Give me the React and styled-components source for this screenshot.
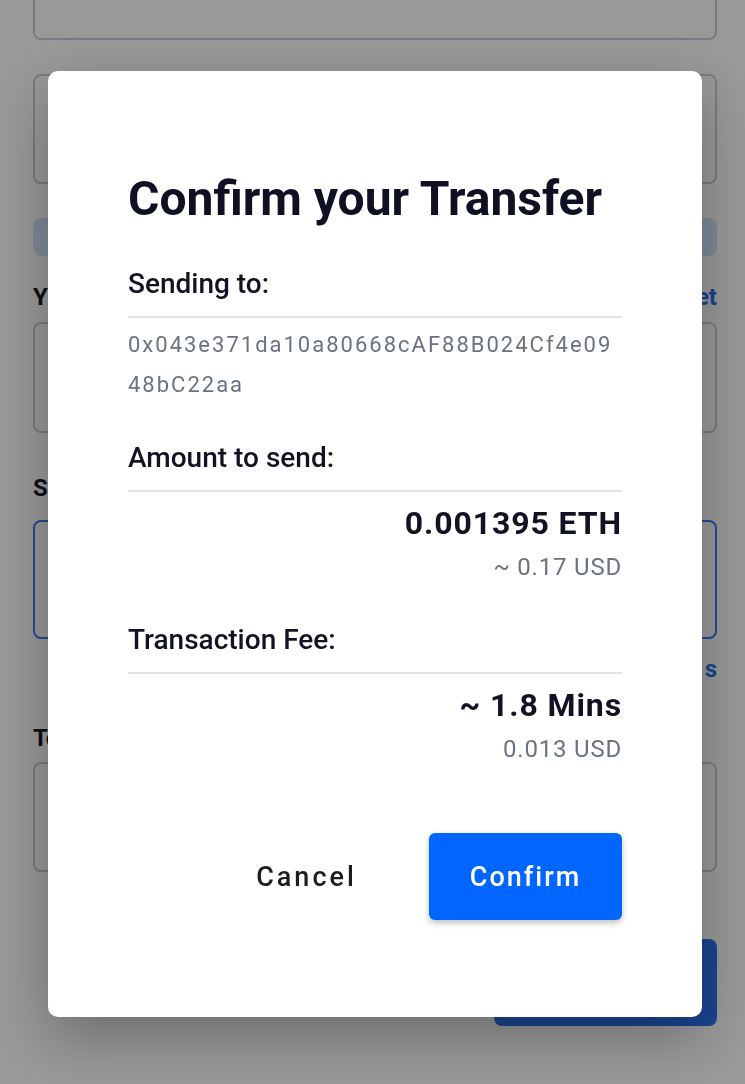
import styled, { createGlobalStyle } from "styled-components";

const GlobalStyle = createGlobalStyle`
  html, body {
    margin: 0;
    padding: 0;
    background: #ffffff;
    font-family: Roboto, "Liberation Sans", sans-serif;
    overflow: hidden;
  }
`;

export const Page = styled.div`
  display: flex;
  flex-direction: column;
  padding: 0 28px 0 33px;
  margin-top: -70px;
`;

export const Field = styled.div`
  height: ${(p) => p.$height || 110}px;
  box-sizing: border-box;
  border: ${(p) => (p.$focused ? "2px solid #3b7ff5" : "2px solid #c7cfdb")};
  border-radius: 8px;
  margin-bottom: ${(p) => p.$gap || 0}px;
`;

export const Bar = styled.div`
  height: 38px;
  border-radius: 8px;
  background: #d4e6ff;
  margin-bottom: 26px;
`;

export const LabelRow = styled.div`
  display: flex;
  justify-content: space-between;
  align-items: center;
  height: 30px;
  margin-bottom: ${(p) => p.$gap || 10}px;
  font-size: 24px;
  font-weight: 700;
  color: #151826;
`;

export const Link = styled.span`
  color: #2b6ff0;
  font-weight: 700;
`;

export const HintRow = styled.div`
  display: flex;
  justify-content: flex-end;
  height: 30px;
  margin: 16px 0 38px;
  font-size: 24px;
`;

export const SubmitRow = styled.div`
  display: flex;
  justify-content: flex-end;
  margin-top: 67px;
`;

export const SubmitButton = styled.div`
  width: 223px;
  height: 87px;
  border-radius: 8px;
  background: #2c74f2;
`;

export const Overlay = styled.div`
  position: fixed;
  inset: 0;
  padding: 4px 0 0 5px;
  background: rgba(0, 0, 0, 0.4);
  display: flex;
  align-items: center;
  justify-content: center;
`;

export const Modal = styled.div`
  width: 654px;
  box-sizing: border-box;
  background: #ffffff;
  border-radius: 10px;
  padding: 100px 80px 97px;
  box-shadow: 0 20px 60px rgba(0, 0, 0, 0.3);
  display: flex;
  flex-direction: column;
`;

export const Title = styled.h1`
  margin: 0;
  font-size: 48px;
  line-height: 56px;
  font-weight: 700;
  color: #0f1123;
`;

export const Section = styled.div`
  margin-top: ${(p) => p.$gap}px;
  display: flex;
  flex-direction: column;
`;

export const SectionLabel = styled.div`
  font-size: 28px;
  line-height: 34px;
  font-weight: 500;
  color: #111322;
  padding-bottom: 15px;
  border-bottom: 2px solid #e3e3e3;
`;

export const Address = styled.div`
  margin-top: 7px;
  font-size: 22px;
  line-height: 40px;
  letter-spacing: 2px;
  color: #6b7280;
  word-break: break-all;
`;

export const Value = styled.div`
  margin-top: 11px;
  text-align: right;
  font-size: 32px;
  line-height: 40px;
  font-weight: 700;
  letter-spacing: 0.9px;
  color: #111322;
`;

export const SubValue = styled.div`
  margin-top: 8px;
  text-align: right;
  font-size: 24px;
  line-height: 32px;
  letter-spacing: 0.8px;
  color: #6b7280;
`;

export const Actions = styled.div`
  margin-top: 68px;
  display: flex;
  justify-content: flex-end;
  gap: 26px;
`;

export const Button = styled.button`
  width: 193px;
  height: 87px;
  padding: 0;
  border: none;
  border-radius: 6px;
  font-family: Roboto, "Liberation Sans", sans-serif;
  font-size: 27px;
  font-weight: 500;
  letter-spacing: ${(p) => (p.$primary ? 2 : 3)}px;
  cursor: pointer;
  background: ${(p) => (p.$primary ? "#0066ff" : "transparent")};
  color: ${(p) => (p.$primary ? "#ffffff" : "#1c1c22")};
  box-shadow: ${(p) =>
    p.$primary ? "0 3px 6px rgba(0, 0, 0, 0.25)" : "none"};
`;

const App = () => {
  return (
    <>
      <GlobalStyle />
      <Page aria-hidden="true">
        <Field $gap={34} />
        <Field $gap={34} />
        <Bar />
        <LabelRow>
          <span>Y</span>
          <Link>et</Link>
        </LabelRow>
        <Field $height={111} $gap={40} />
        <LabelRow $gap={17}>
          <span>S</span>
        </LabelRow>
        <Field $height={119} $focused />
        <HintRow>
          <Link>s</Link>
        </HintRow>
        <LabelRow $gap={9}>
          <span>To</span>
        </LabelRow>
        <Field />
        <SubmitRow>
          <SubmitButton />
        </SubmitRow>
      </Page>

      <Overlay>
        <Modal>
          <Title>Confirm your Transfer</Title>

          <Section $gap={40}>
            <SectionLabel>Sending to:</SectionLabel>
            <Address>0x043e371da10a80668cAF88B024Cf4e0948bC22aa</Address>
          </Section>

          <Section $gap={36}>
            <SectionLabel>Amount to send:</SectionLabel>
            <Value>0.001395 ETH</Value>
            <SubValue>~ 0.17 USD</SubValue>
          </Section>

          <Section $gap={40}>
            <SectionLabel>Transaction Fee:</SectionLabel>
            <Value>~ 1.8 Mins</Value>
            <SubValue>0.013 USD</SubValue>
          </Section>

          <Actions>
            <Button>Cancel</Button>
            <Button $primary>Confirm</Button>
          </Actions>
        </Modal>
      </Overlay>
    </>
  );
};

export default App;
